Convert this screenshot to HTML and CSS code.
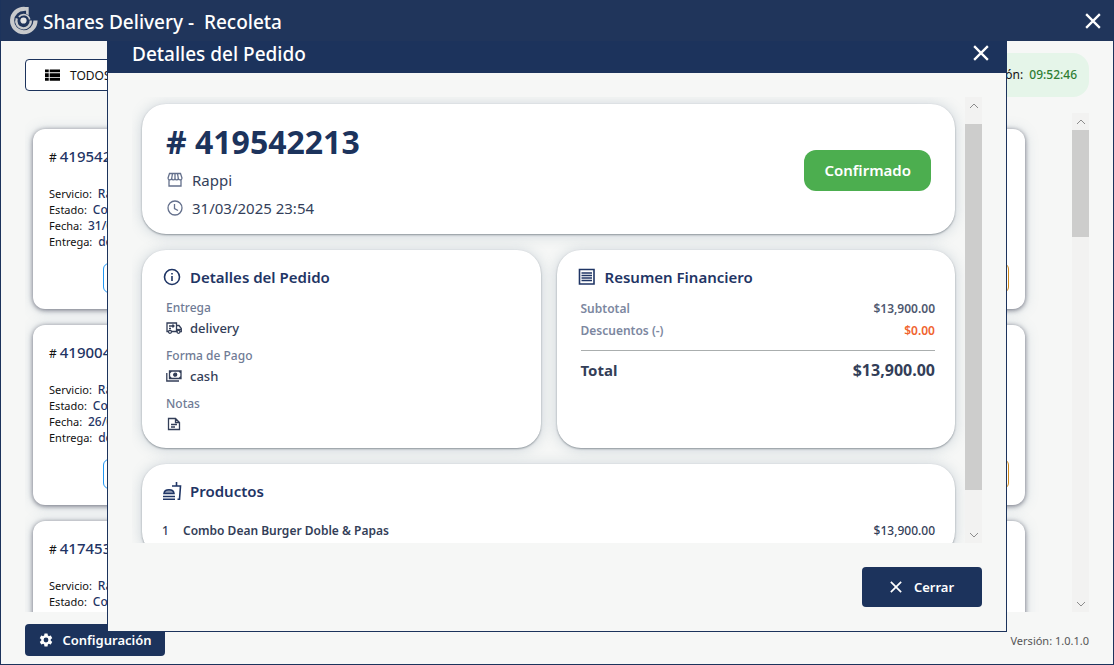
FILE: index.html
```html
<!DOCTYPE html>
<html lang="es">
<head>
<meta charset="UTF-8" />
<meta name="viewport" content="width=device-width, initial-scale=1" />
<title>Shares Delivery</title>
<link rel="stylesheet" href="styles.css">
</head>
<body>

<header class="titlebar">
  <svg class="logo" viewBox="0 0 28 28" fill="none" stroke="#c8cacc">
    <path d="M15 2.800A11.300 11.300 0 1 0 25.600 14" stroke-width="4"/>
    <path d="M13.500 1h5.500v8l-2.500-1.500V4.600h-3z" fill="#c8cacc" stroke="none"/>
    <path d="M7.500 12A7 7 0 1 0 21 14" stroke-width="2.200"/>
    <path d="M9.500 10.500A6 6 0 0 1 20 13" stroke-width="1.600"/>
    <circle cx="14" cy="14" r="3" fill="#e4e5e6" stroke="none"/>
  </svg>
  <h1>Shares Delivery -&nbsp; Recoleta</h1>
  <button class="close" aria-label="Cerrar ventana">
    <svg viewBox="0 0 14 14"><path d="M1 1l12 12M13 1L1 13"/></svg>
  </button>
</header>

<main class="page">
  <div class="toolbar">
    <button class="filter">
      <svg viewBox="0 0 16 12"><path d="M0 0h4v3H0zM5 0h11v3H5zM0 4h4v4H0zM5 4h11v4H5zM0 9h4v3H0zM5 9h11v3H5z"/></svg>
      TODOS
    </button>
    <p class="updated">Actualización: <b>09:52:46</b></p>
  </div>

  <div class="orders">
    <div class="grid">
      <article class="order">
        <h2><small>#</small>419542213</h2>
        <p>Servicio: <b>Rappi</b></p>
        <p>Estado: <b>Confirmado</b></p>
        <p>Fecha: <b>31/03/2025</b></p>
        <p>Entrega: <b>delivery</b></p>
        <div class="actions"><button class="blue" aria-label="Detalle"></button><button class="orange" aria-label="Imprimir"></button></div>
      </article>
      <article class="order"></article>
      <article class="order">
        <div class="actions"><button class="blue" aria-label="Detalle"></button><button class="orange" aria-label="Imprimir"></button></div>
      </article>
      <article class="order">
        <h2><small>#</small>419004</h2>
        <p>Servicio: <b>Rappi</b></p>
        <p>Estado: <b>Confirmado</b></p>
        <p>Fecha: <b>26/03/2025</b></p>
        <p>Entrega: <b>delivery</b></p>
        <div class="actions"><button class="blue" aria-label="Detalle"></button><button class="orange" aria-label="Imprimir"></button></div>
      </article>
      <article class="order"></article>
      <article class="order">
        <div class="actions"><button class="blue" aria-label="Detalle"></button><button class="orange" aria-label="Imprimir"></button></div>
      </article>
      <article class="order">
        <h2><small>#</small>417453</h2>
        <p>Servicio: <b>Rappi</b></p>
        <p>Estado: <b>Confirmado</b></p>
      </article>
      <article class="order"></article>
      <article class="order"></article>
    </div>
    <div class="scrollbar">
      <svg viewBox="0 0 10 6"><path d="M1 5l4-4 4 4"/></svg>
      <div class="track"><div class="thumb" style="height: 23%"></div></div>
      <svg viewBox="0 0 10 6"><path d="M1 1l4 4 4-4"/></svg>
    </div>
  </div>

  <footer class="bottom">
    <button class="primary config">
      <svg viewBox="0 0 24 24"><path d="M19.140 12.940c.04-.3.060-.610.060-.940s-.02-.640-.070-.940l2.030-1.580a.49.49 0 0 0 .12-.610l-1.920-3.320a.49.49 0 0 0-.590-.220l-2.390.960a7 7 0 0 0-1.620-.940l-.360-2.540a.48.48 0 0 0-.480-.410h-3.840a.48.48 0 0 0-.470.410l-.360 2.540c-.590.240-1.130.570-1.620.940l-2.390-.960a.48.48 0 0 0-.590.220L2.740 8.870a.48.48 0 0 0 .12.610l2.030 1.580a6 6 0 0 0 0 1.880l-2.030 1.580a.49.49 0 0 0-.12.610l1.920 3.320c.12.220.37.290.590.220l2.390-.960c.5.380 1.030.7 1.620.940l.360 2.540c.05.240.240.410.480.410h3.840c.240 0 .440-.170.470-.410l.360-2.540a7 7 0 0 0 1.620-.940l2.390.960c.220.080.470 0 .590-.220l1.920-3.320a.48.48 0 0 0-.12-.610zM12 15.600a3.600 3.600 0 1 1 0-7.200 3.600 3.600 0 0 1 0 7.200z"/></svg>
      Configuración
    </button>
    <span class="version">Versión: 1.0.1.0</span>
  </footer>
</main>

<div class="overlay">
  <section class="dialog" role="dialog" aria-labelledby="dialog-title">
    <header class="dialog-head">
      <h2 id="dialog-title">Detalles del Pedido</h2>
      <button class="close" aria-label="Cerrar detalles">
        <svg viewBox="0 0 14 14"><path d="M1 1l12 12M13 1L1 13"/></svg>
      </button>
    </header>

    <div class="dialog-body">
      <div class="content">
        <div class="card summary">
          <div>
            <h3># 419542213</h3>
            <p>
              <svg class="line" viewBox="0 0 16 16"><path d="M2 8v6h12V8M2.500 1.500h11L15 6c0 2.500-3.500 2.500-3.700.3C11 8.500 8 8.500 8 6.300 8 8.500 5 8.500 4.700 6.300 4.500 8.500 1 8.500 1 6zM5.500 1.500l-.8 4.800M8 1.500v4.800M10.500 1.500l.8 4.800"/></svg>
              Rappi
            </p>
            <p>
              <svg class="line" viewBox="0 0 16 16"><circle cx="8" cy="8" r="7"/><path d="M7.500 4v4.500l3.500 2"/></svg>
              31/03/2025 23:54
            </p>
          </div>
          <span class="badge">Confirmado</span>
        </div>

        <div class="columns">
          <div class="card">
            <h4>
              <svg viewBox="0 0 20 20"><circle cx="10" cy="10" r="7.500"/><path d="M10 9v5M10 6v1.600"/></svg>
              Detalles del Pedido
            </h4>
            <dl class="info">
              <dt>Entrega</dt>
              <dd>
                <svg viewBox="0 0 16 16"><path d="M2.500 11.500H1V3h9.500v8.500h-5M10.500 5.500h2.500l2.300 3v3h-1.200M3 6h5M6.500 4.500L8 6 6.500 7.500M3 8.500h2"/><circle cx="4" cy="11.800" r="1.500"/><circle cx="12.500" cy="11.800" r="1.500"/><path d="M10.500 9.500h4.500"/></svg>
                delivery
              </dd>
              <dt>Forma de Pago</dt>
              <dd>
                <svg viewBox="0 0 16 16"><path d="M3.500 3h11.500v7.500H3.500zM.8 5v8h12.200M3.500 5l2-2M15 5l-2-2M3.500 8.500l2 2M15 8.500l-2 2"/><circle cx="9.200" cy="6.700" r="1.500" fill="currentColor"/></svg>
                cash
              </dd>
              <dt>Notas</dt>
              <dd>
                <svg viewBox="0 0 16 16"><path d="M2.500 2.500h7l4 4v7h-11zM9.500 2.500v4h4M5 8.500h6M5 11h4"/></svg>
              </dd>
            </dl>
          </div>

          <div class="card">
            <h4>
              <svg viewBox="0 0 20 20"><path d="M2.500 2.500h14.500v14.500h-14.500zM4.500 6h10.500M4.500 8.500h10.500M4.500 11h10.500M4.500 13.500h10.500"/></svg>
              Resumen Financiero
            </h4>
            <dl class="totals">
              <div><dt>Subtotal</dt><dd>$13,900.00</dd></div>
              <div class="discount"><dt>Descuentos (-)</dt><dd>$0.00</dd></div>
              <div class="total"><dt>Total</dt><dd>$13,900.00</dd></div>
            </dl>
          </div>
        </div>

        <div class="card">
          <h4>
            <svg viewBox="0 0 20 20"><path d="M1 18.200h12M1 15.500h12M10 5h8.500l-1 13.200h-2M14.500 5V1"/><path d="M2 12.500c.5-5 9.500-5 10 0z" fill="#8f9ab2"/></svg>
            Productos
          </h4>
          <div class="product">
            <span class="qty">1</span>
            <span class="name">Combo Dean Burger Doble &amp; Papas</span>
            <span class="price">$13,900.00</span>
          </div>
        </div>
      </div>
      <div class="scrollbar">
        <svg viewBox="0 0 10 6"><path d="M1 5l4-4 4 4"/></svg>
        <div class="track wide"><div class="thumb" style="height: 91%"></div></div>
        <svg viewBox="0 0 10 6"><path d="M1 1l4 4 4-4"/></svg>
      </div>
    </div>

    <footer class="dialog-foot">
      <button class="primary">
        <svg class="cross" viewBox="0 0 14 14"><path d="M1 1l12 12M13 1L1 13"/></svg>
        Cerrar
      </button>
    </footer>
  </section>
</div>

</body>
</html>
```
FILE: styles.css
```css
* {
  box-sizing: border-box;
}
body {
  margin: 0;
  height: 100vh;
  display: flex;
  flex-direction: column;
  border: 1px solid #1c335c;
  border-top: none;
  background: #f6f7f6;
  color: #111;
  font-family: "Segoe UI", "Noto Sans", sans-serif;
  font-size: 12px;
  overflow: hidden;
}
h1, h2, h3, h4, p, dl, dd {
  margin: 0;
}
button {
  font-family: inherit;
  cursor: pointer;
}
svg {
  flex: none;
}

/* window title bar, stays above the dialog */
.titlebar {
  position: relative;
  z-index: 3;
  display: flex;
  align-items: center;
  height: 41px;
  flex: none;
  padding: 0 12px 0 8px;
  background: #20355b;
  color: #fff;
}
.logo {
  width: 29px;
  height: 29px;
  margin-right: 5px;
}
.titlebar h1, .dialog-head h2 {
  padding-top: 2px;
  font-size: 19px;
  font-weight: 500;
  line-height: 26px;
}
.close {
  margin-left: auto;
  padding: 0;
  border: none;
  background: none;
  display: flex;
}
.close svg {
  width: 16px;
  height: 16px;
}
.close svg, .cross {
  fill: none;
  stroke: #fff;
  stroke-width: 2;
}

.page {
  flex: 1;
  min-height: 0;
  display: flex;
  flex-direction: column;
  padding: 12px 24px 8px;
}
.toolbar {
  display: flex;
  align-items: center;
  justify-content: space-between;
}
.filter {
  display: flex;
  align-items: center;
  gap: 10px;
  height: 32px;
  padding: 0 19px;
  border: 1px solid #1c335c;
  border-radius: 4px;
  background: #fff;
  font-size: 12px;
  color: #111;
}
.filter svg {
  width: 15px;
  height: 12px;
}
.updated {
  padding: 0 12px;
  line-height: 44px;
  border-radius: 16px;
  background: #e5f5e9;
}
.updated b {
  margin-left: 3px;
  font-weight: 500;
  color: #2e7d32;
}

.orders {
  flex: 1;
  min-height: 0;
  display: flex;
  margin: 16px 0 12px;
}
.grid {
  flex: 1;
  display: grid;
  grid-template-columns: repeat(3, 1fr);
  grid-auto-rows: 180px;
  gap: 16px;
  padding: 16px 47px 0 8px;
  overflow: hidden;
}
.order {
  display: flex;
  flex-direction: column;
  padding: 15px 16px 16px;
  border-radius: 12px;
  background: #fff;
  box-shadow: 0 1px 5px rgba(30, 30, 50, 0.6), 0 1px 14px rgba(100, 130, 160, 0.25);
}
.order h2 {
  margin-bottom: 16px;
  font-size: 15px;
  font-weight: 500;
  line-height: 24px;
  color: #1f3565;
}
.order small {
  margin-right: 3px;
  font-size: 12px;
  font-weight: 400;
  color: #111;
}
.order p {
  font-size: 11px;
  line-height: 16px;
}
.order b {
  margin-left: 3px;
  font-size: 12px;
  font-weight: 500;
  color: #1f3565;
}
.actions {
  display: flex;
  justify-content: flex-end;
  gap: 8px;
  margin-top: auto;
}
.actions button {
  width: 113px;
  height: 30px;
  border-radius: 6px;
  background: #fff;
}
.actions .blue {
  border: 1px solid #2196f3;
}
.actions .orange {
  border: 1px solid #d08a1d;
}

.scrollbar {
  width: 17px;
  flex: none;
  display: flex;
  flex-direction: column;
  align-items: center;
  background: #f2f2f1;
}
.scrollbar svg {
  width: 10px;
  height: 6px;
  margin: 6px 0 5px;
  fill: none;
  stroke: #8c8c8c;
}
.track {
  flex: 1;
  width: 100%;
}
.track.wide {
  padding-top: 10px;
}
.thumb {
  background: #cdcdcc;
}

.bottom {
  display: flex;
  align-items: center;
  justify-content: space-between;
}
.version {
  font-size: 11px;
  color: #555;
}
.primary {
  display: flex;
  align-items: center;
  justify-content: center;
  gap: 12px;
  height: 40px;
  min-width: 120px;
  border: none;
  border-radius: 4px;
  background: #1c335c;
  color: #fff;
  font-size: 13px;
  font-weight: 600;
}
.config {
  height: 32px;
  min-width: 140px;
  gap: 8px;
  padding: 0 12px;
}
.config svg {
  width: 16px;
  height: 16px;
  fill: #fff;
}
.cross {
  width: 12px;
  height: 12px;
}

/* order details dialog */
.overlay {
  position: fixed;
  inset: 0;
  z-index: 2;
  display: flex;
  justify-content: center;
  padding: 32px 16px 33px;
}
.dialog {
  display: flex;
  flex-direction: column;
  width: 900px;
  max-width: 100%;
  border: 1px solid #1c335c;
  background: #f6f7f6;
}
.dialog-head {
  display: flex;
  align-items: center;
  height: 40px;
  flex: none;
  padding: 0 17px 0 24px;
  background: #1c335c;
  color: #fff;
}
.dialog-body {
  flex: 1;
  min-height: 0;
  display: flex;
  margin: 24px 24px 0;
}
.content {
  flex: 1;
  display: flex;
  flex-direction: column;
  gap: 16px;
  padding: 7px 10px 0;
  overflow: hidden;
}
.dialog-foot {
  display: flex;
  justify-content: flex-end;
  padding: 24px;
}

.card {
  flex: none;
  padding: 13px 20px 14px;
  border-radius: 24px;
  background: #fff;
  box-shadow: 0 1px 2px rgba(60, 70, 80, 0.5), 0 1px 14px rgba(100, 125, 150, 0.3);
}
.card h4 {
  display: flex;
  align-items: center;
  gap: 8px;
  font-size: 15px;
  font-weight: 600;
  line-height: 28px;
  color: #1f3565;
}
.card h4 svg {
  width: 20px;
  height: 20px;
  fill: none;
  stroke: currentColor;
  stroke-width: 1.6;
}

.summary {
  display: flex;
  align-items: center;
  justify-content: space-between;
  padding: 14px 24px 12px;
}
.summary h3 {
  font-size: 32px;
  font-weight: 700;
  line-height: 48px;
  color: #1c335c;
}
.summary p {
  display: flex;
  align-items: center;
  gap: 8px;
  font-size: 15px;
  font-weight: 400;
  line-height: 28px;
  color: #343f5a;
}
.line {
  width: 18px;
  height: 16px;
  fill: none;
  stroke: #64708c;
  stroke-width: 1.3;
}
.badge {
  padding: 0 20px;
  border-radius: 12px;
  background: #4cae4f;
  color: #fff;
  font-size: 15px;
  font-weight: 600;
  line-height: 41px;
}

.columns {
  flex: none;
  display: grid;
  grid-template-columns: 1fr 1fr;
  gap: 16px;
}
.info, .totals {
  padding: 7px 0 0 4px;
}
.info dt {
  font-weight: 500;
  line-height: 20px;
  color: #6f7b95;
}
.info dd {
  display: flex;
  align-items: center;
  gap: 8px;
  height: 20px;
  margin-bottom: 8px;
  font-size: 13px;
  font-weight: 500;
  color: #333e58;
}
.info dd:last-child {
  margin-bottom: 0;
}
.info svg {
  width: 16px;
  height: 16px;
  fill: none;
  stroke: currentColor;
  stroke-width: 1.3;
}

.totals div {
  display: flex;
  justify-content: space-between;
  font-weight: 600;
  line-height: 22px;
  color: #7c87a0;
}
.totals dd {
  color: #4f5970;
}
.totals .discount dd {
  color: #f0642f;
}
.totals .total {
  margin-top: 8px;
  padding-top: 8px;
  border-top: 1px solid #aaaeae;
  font-size: 15px;
  font-weight: 700;
  color: #333e58;
}
.totals .total dd {
  font-size: 16px;
  color: #333e58;
}

.product {
  display: flex;
  margin-top: 15px;
  font-weight: 500;
  line-height: 22px;
  color: #333e58;
}
.qty {
  width: 21px;
}
.name {
  font-weight: 600;
}
.price {
  margin-left: auto;
}
```
